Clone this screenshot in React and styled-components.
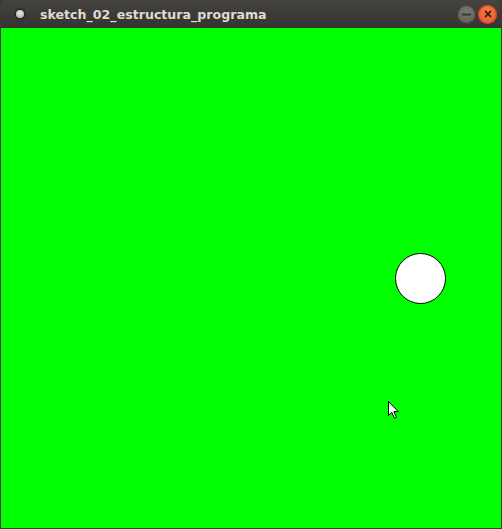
import React from "react";
import styled, { createGlobalStyle } from "styled-components";

const Global = createGlobalStyle`
  html, body { margin: 0; padding: 0; background: #3c3b37; }
  #root { width: 502px; height: 529px; }
`;

const Window = styled.div`
  width: 502px;
  height: 529px;
  box-sizing: border-box;
  display: flex;
  flex-direction: column;
  background: #3c3b37;
  border-left: 1px solid #3c3b37;
  border-right: 1px solid #3c3b37;
  border-bottom: 1px solid #3c3b37;
  overflow: hidden;
`;

const TitleBar = styled.div`
  height: 28px;
  flex: none;
  display: flex;
  align-items: center;
  padding: 0 4px 0 15px;
  background: linear-gradient(#45443f, #3a3935 60%, #363531);
  border-radius: 5px 5px 0 0;
`;

const AppDot = styled.span`
  width: 8px;
  height: 8px;
  border-radius: 50%;
  background: radial-gradient(circle at 50% 40%, #e8e8e6, #a9a8a4);
  box-shadow: 0 0 0 2px #2e2d29;
  margin-right: 16px;
`;

const Title = styled.span`
  flex: 1;
  font-family: "DejaVu Sans", sans-serif;
  font-weight: bold;
  font-size: 12.6px;
  color: #dfdbd2;
`;

const Controls = styled.div`
  display: flex;
  gap: 2px;
  align-items: center;
`;

const CtrlBtn = styled.span`
  width: 19px;
  height: 19px;
  border-radius: 50%;
  display: flex;
  align-items: center;
  justify-content: center;
  background: ${(p) =>
    p.$close
      ? "radial-gradient(circle at 50% 35%, #f47d4f, #e0502a)"
      : "radial-gradient(circle at 50% 35%, #7a7973, #5a5955)"};
  box-shadow: inset 0 0 0 1px ${(p) => (p.$close ? "#b9441f" : "#3a3935")};
`;

const Canvas = styled.div`
  flex: 1;
  position: relative;
  background: #00ff00;
`;

const Ball = styled.div`
  position: absolute;
  left: 394px;
  top: 225px;
  width: 51px;
  height: 51px;
  box-sizing: border-box;
  border-radius: 50%;
  background: #ffffff;
  border: 1px solid #000000;
`;

const Cursor = styled.svg`
  position: absolute;
  left: 386px;
  top: 372px;
`;

export default function App() {
  return (
    <>
      <Global />
      <Window>
        <TitleBar>
          <AppDot />
          <Title>sketch_02_estructura_programa</Title>
          <Controls>
            <CtrlBtn>
              <svg width="9" height="3" viewBox="0 0 9 3">
                <rect x="0" y="0.5" width="9" height="2" fill="#3a3935" />
              </svg>
            </CtrlBtn>
            <CtrlBtn $close>
              <svg width="8" height="8" viewBox="0 0 8 8">
                <path d="M1 1 L7 7 M7 1 L1 7" stroke="#5a1a08" strokeWidth="1.8" />
              </svg>
            </CtrlBtn>
          </Controls>
        </TitleBar>
        <Canvas>
          <Ball />
          <Cursor width="14" height="20" viewBox="0 0 14 20">
            <path
              d="M1.5 1.5 L1.5 15.5 L4.8 12.4 L7.3 18.2 L9.4 17.3 L6.9 11.6 L11.3 11.6 Z"
              fill="#ffffff"
              stroke="#000000"
              strokeWidth="1"
              strokeLinejoin="miter"
            />
          </Cursor>
        </Canvas>
      </Window>
    </>
  );
}
